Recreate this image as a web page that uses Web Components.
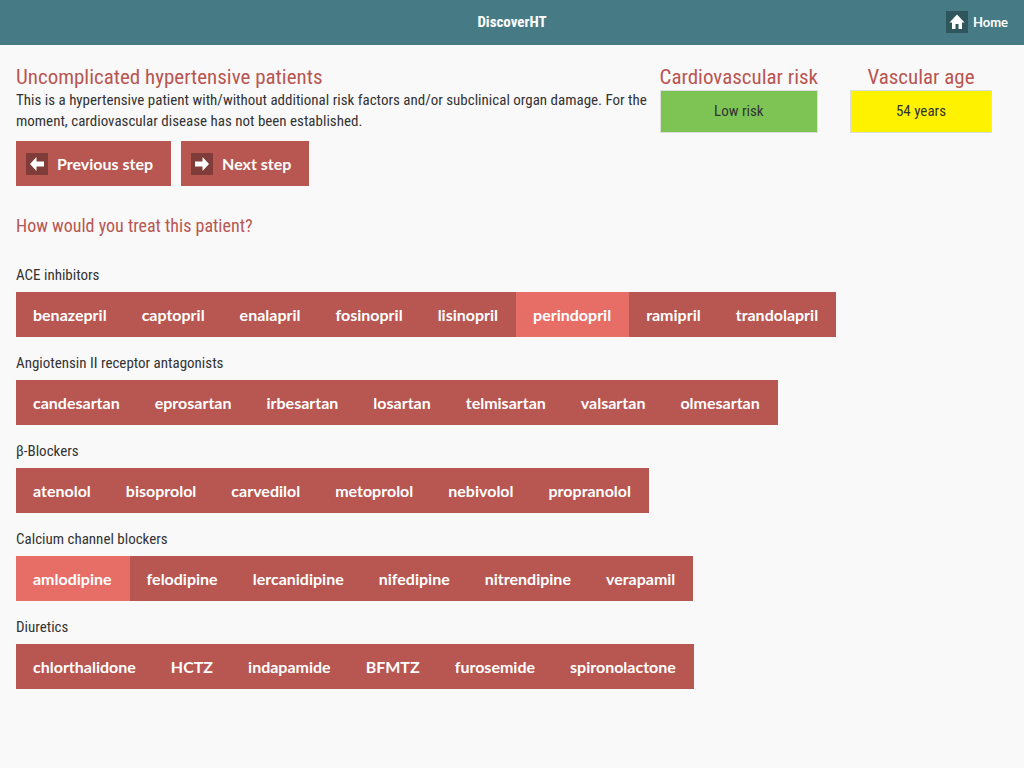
<!DOCTYPE html>
<html lang="en">
<head>
<meta charset="utf-8">
<meta name="viewport" content="width=device-width, initial-scale=1">
<title>DiscoverHT</title>
<style>
  :root {
    --red: #b85651;
    --red-active: #e76e67;
    --teal: #467b86;
    --text: #333;
    --button: Lato, sans-serif;
  }
  body {
    margin: 0;
    background: #f9f9f9;
    color: var(--text);
    font: 15px/21px "Roboto Condensed", Roboto, sans-serif;
  }
</style>
</head>
<body>
<ht-app></ht-app>

<script>
const ICONS = {
  home: '<path d="M11 3.5 L3.5 11.5 H6 V18 H9.5 V13 H12.5 V18 H16 V11.5 H18.5 Z"/>',
  left: '<path d="M4 11 L10.5 4 V8.5 H18 V13.5 H10.5 V18 Z"/>',
  right: '<path d="M18 11 L11.5 4 V8.5 H4 V13.5 H11.5 V18 Z"/>'
};

const DRUGS = [
  { label: 'ACE inhibitors', selected: 'perindopril',
    items: ['benazepril', 'captopril', 'enalapril', 'fosinopril', 'lisinopril', 'perindopril', 'ramipril', 'trandolapril'] },
  { label: 'Angiotensin II receptor antagonists',
    items: ['candesartan', 'eprosartan', 'irbesartan', 'losartan', 'telmisartan', 'valsartan', 'olmesartan'] },
  { label: 'β-Blockers',
    items: ['atenolol', 'bisoprolol', 'carvedilol', 'metoprolol', 'nebivolol', 'propranolol'] },
  { label: 'Calcium channel blockers', selected: 'amlodipine',
    items: ['amlodipine', 'felodipine', 'lercanidipine', 'nifedipine', 'nitrendipine', 'verapamil'] },
  { label: 'Diuretics',
    items: ['chlorthalidone', 'HCTZ', 'indapamide', 'BFMTZ', 'furosemide', 'spironolactone'] }
];

class HtIcon extends HTMLElement {
  constructor() {
    super();
    this.attachShadow({ mode: 'open' });
  }

  connectedCallback() {
    this.shadowRoot.innerHTML = `
      <style>
        :host { display: block; width: 22px; height: 22px; background: rgba(0, 0, 0, 0.3); }
        svg { display: block; fill: #fff; }
      </style>
      <svg width="22" height="22" viewBox="0 0 22 22" aria-hidden="true">${ICONS[this.getAttribute('name')]}</svg>
    `;
  }
}

class HtHeader extends HTMLElement {
  constructor() {
    super();
    this.attachShadow({ mode: 'open' });
    this.shadowRoot.innerHTML = `
      <style>
        :host { display: block; background: var(--teal); color: #fff; }
        header {
          box-sizing: border-box;
          display: grid;
          grid-template-columns: 1fr auto 1fr;
          align-items: center;
          height: 45px;
          padding: 0 16px 1px;
        }
        h1 { grid-column: 2; margin: 0; font-size: 15px; line-height: 22px; }
        a {
          justify-self: end;
          display: flex;
          align-items: center;
          gap: 5px;
          color: inherit;
          font: bold 13px/22px var(--button);
          text-decoration: none;
        }
      </style>
      <header>
        <h1><slot></slot></h1>
        <a href="#"><ht-icon name="home"></ht-icon>Home</a>
      </header>
    `;
  }
}

class HtStepButton extends HTMLElement {
  constructor() {
    super();
    this.attachShadow({ mode: 'open' });
  }

  connectedCallback() {
    this.shadowRoot.innerHTML = `
      <style>
        :host { display: block; }
        button {
          display: flex;
          align-items: center;
          gap: 9px;
          height: 45px;
          padding: 0 18px 0 10px;
          border: 0;
          background: var(--red);
          color: #fff;
          font: bold 16px/21px var(--button);
          cursor: pointer;
        }
      </style>
      <button type="button"><ht-icon name="${this.getAttribute('icon')}"></ht-icon><slot></slot></button>
    `;
  }
}

class HtIndicator extends HTMLElement {
  constructor() {
    super();
    this.attachShadow({ mode: 'open' });
    this.shadowRoot.innerHTML = `
      <style>
        :host { display: block; text-align: center; }
        h2 {
          margin: 0;
          color: var(--red);
          font-size: 21px;
          font-weight: normal;
          line-height: 26px;
          white-space: nowrap;
        }
        div {
          padding: 10px 0;
          border: 1px solid #ddd;
          background: var(--level);
        }
      </style>
      <h2><slot name="label"></slot></h2>
      <div><slot></slot></div>
    `;
  }
}

class HtDrugGroup extends HTMLElement {
  constructor() {
    super();
    this.attachShadow({ mode: 'open' });
  }

  set data(group) {
    this.shadowRoot.innerHTML = `
      <style>
        :host { display: block; }
        h3 { margin: 0 0 6px; font-size: 15px; font-weight: normal; line-height: 21px; }
        div { display: flex; flex-wrap: wrap; width: fit-content; background: var(--red); }
        button {
          height: 45px;
          padding: 0 18px 0 17px;
          border: 0;
          background: none;
          color: #fff;
          font: bold 16px/21px var(--button);
          cursor: pointer;
        }
        button[aria-pressed="true"] { background: var(--red-active); }
      </style>
      <h3 id="label">${group.label}</h3>
      <div role="group" aria-labelledby="label">
        ${group.items.map(item => `<button type="button" aria-pressed="${item === group.selected}">${item}</button>`).join('')}
      </div>
    `;

    this.shadowRoot.querySelectorAll('button').forEach(button => {
      button.addEventListener('click', () => {
        button.setAttribute('aria-pressed', button.getAttribute('aria-pressed') !== 'true');
      });
    });
  }
}

class HtApp extends HTMLElement {
  constructor() {
    super();
    this.attachShadow({ mode: 'open' });
    this.shadowRoot.innerHTML = `
      <style>
        :host { display: block; }
        main { padding: 19px 16px; }
        .summary { display: flex; align-items: flex-start; }
        .intro { flex: 1; margin-right: 8px; }
        .risk { flex: 0 0 158px; margin-right: 32px; --level: #7dc455; }
        .age { flex: 0 0 142px; margin-right: 16px; --level: #fff200; }
        h2, p { margin: 0; }
        h2 { color: var(--red); font-weight: normal; }
        .intro h2 { font-size: 21px; line-height: 26px; }
        .steps { display: flex; gap: 10px; margin-top: 8px; }
        .question { margin: 28px 0 27px; font-size: 18px; line-height: 24px; }
        .groups { display: grid; gap: 16px; }
      </style>
      <ht-header>DiscoverHT</ht-header>
      <main>
        <section class="summary">
          <div class="intro">
            <h2>Uncomplicated hypertensive patients</h2>
            <p>This is a hypertensive patient with/without additional risk factors and/or subclinical organ damage. For the moment, cardiovascular disease has not been established.</p>
          </div>
          <ht-indicator class="risk"><span slot="label">Cardiovascular risk</span>Low risk</ht-indicator>
          <ht-indicator class="age"><span slot="label">Vascular age</span>54 years</ht-indicator>
        </section>
        <nav class="steps">
          <ht-step-button icon="left">Previous step</ht-step-button>
          <ht-step-button icon="right">Next step</ht-step-button>
        </nav>
        <h2 class="question">How would you treat this patient?</h2>
        <section class="groups"></section>
      </main>
    `;
  }

  connectedCallback() {
    const groups = this.shadowRoot.querySelector('.groups');
    DRUGS.forEach(drug => {
      const group = document.createElement('ht-drug-group');
      group.data = drug;
      groups.append(group);
    });
  }
}

customElements.define('ht-icon', HtIcon);
customElements.define('ht-header', HtHeader);
customElements.define('ht-step-button', HtStepButton);
customElements.define('ht-indicator', HtIndicator);
customElements.define('ht-drug-group', HtDrugGroup);
customElements.define('ht-app', HtApp);
</script>
</body>
</html>
